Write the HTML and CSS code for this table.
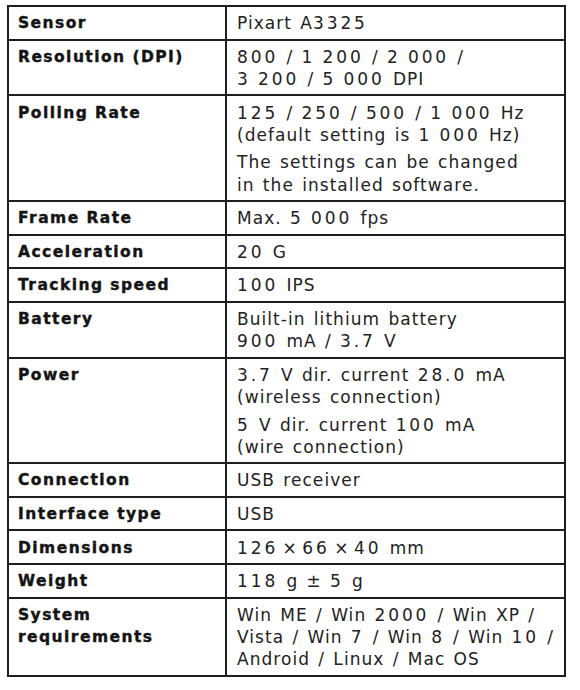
FILE: index.html
```html
<!DOCTYPE html>
<html lang="en">
<head>
<meta charset="utf-8">
<title>Specifications</title>
<link rel="stylesheet" href="styles.css">
</head>
<body>
<div class="wrap">
<table class="specs">
  <tr><th>Sensor</th><td><p>Pixart A<span class="n">3325</span></p></td></tr>
  <tr><th>Resolution (DPI)</th><td><p><span class="n">800</span> / <span class="n">1 200</span> / <span class="n">2 000</span> /<br><span class="n">3 200</span> / <span class="n">5 000</span> DPI</p></td></tr>
  <tr><th>Polling Rate</th><td><p><span class="n">125</span> / <span class="n">250</span> / <span class="n">500</span> / <span class="n">1 000</span> Hz<br>(default setting is <span class="n">1 000</span> Hz)</p><p>The settings can be changed<br>in the installed software.</p></td></tr>
  <tr><th>Frame Rate</th><td><p>Max. <span class="n">5 000</span> fps</p></td></tr>
  <tr><th>Acceleration</th><td><p><span class="n">20</span> G</p></td></tr>
  <tr><th>Tracking speed</th><td><p><span class="n">100</span> IPS</p></td></tr>
  <tr><th>Battery</th><td><p>Built-in lithium battery<br><span class="n">900</span> mA / <span class="n">3.7</span> V</p></td></tr>
  <tr><th>Power</th><td><p><span class="n">3.7</span> V dir. current <span class="n">28.0</span> mA<br>(wireless connection)</p><p><span class="n">5</span> V dir. current <span class="n">100</span> mA<br>(wire connection)</p></td></tr>
  <tr><th>Connection</th><td><p>USB receiver</p></td></tr>
  <tr><th>Interface type</th><td><p>USB</p></td></tr>
  <tr><th>Dimensions</th><td><p><span class="n">126</span>&thinsp;×&thinsp;<span class="n">66</span>&thinsp;×&thinsp;<span class="n">40</span> mm</p></td></tr>
  <tr><th>Weight</th><td><p><span class="n">118</span> g ± <span class="n">5</span> g</p></td></tr>
  <tr><th>System<br>requirements</th><td><p>Win ME / Win <span class="n">2000</span> / Win XP /<br>Vista / Win <span class="n">7</span> / Win <span class="n">8</span> / Win <span class="n">10</span> /<br>Android / Linux / Mac OS</p></td></tr>
</table>
</div>
</body>
</html>
```
FILE: styles.css
```css
html, body {
  margin: 0;
  padding: 0;
  background: #ffffff;
}
.wrap {
  padding: 5px 0 0 7px;
}
.specs {
  border-collapse: collapse;
  width: 559px;
  table-layout: fixed;
  color: #1c1c1c;
}
.specs th,
.specs td {
  border: 2px solid #1e1e1e;
  vertical-align: top;
  text-align: left;
  padding: 5.3px 4px 4px 10px;
  line-height: 22.3px;
}
.specs th {
  width: 203px;
  padding-left: 9px;
  font-family: "DejaVu Sans", sans-serif;
  font-weight: bold;
  font-size: 15.5px;
  letter-spacing: 1.45px;
  color: #141414;
  -webkit-text-stroke: 0.4px #141414;
}
.specs td {
  font-family: "DejaVu Sans", sans-serif;
  font-weight: normal;
  font-size: 17px;
  letter-spacing: 1.05px;
  word-spacing: 1.8px;
  white-space: nowrap;
  color: #222222;
}
.specs .n {
  letter-spacing: 2.9px;
  word-spacing: -1px;
}
.specs p {
  margin: 0;
}
.specs p + p {
  margin-top: 5px;
}
```
